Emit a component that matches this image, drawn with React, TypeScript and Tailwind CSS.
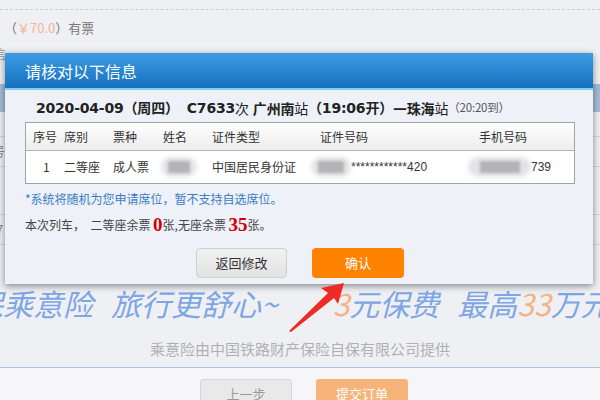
const cjk = "font-['Noto_Sans_CJK_SC',sans-serif]";

function Smudge({ w, core }: { w: number; core: number }) {
  return (
    <span className="relative inline-flex h-[26px] items-center justify-center" style={{ width: w }}>
      <span className="absolute inset-x-0 top-[3px] bottom-[3px] rounded-full bg-[#e4e4e6] blur-[2px]" />
      <span className="relative h-[12px] bg-[#b3b3b5] blur-[1.5px]" style={{ width: core }} />
    </span>
  );
}

export default function App() {
  return (
    <div className={`relative h-[400px] w-[600px] overflow-hidden bg-[#eff0f4] ${cjk}`}>
      {/* page behind the dialog */}
      <div className="h-[10px] border-b border-dashed border-[#cdcdcd]" />
      <div className="h-[26px] pl-[4px] pt-[10px] text-[13px] leading-[16px] text-[#777]">
        （<span className="text-[#f3b593]">￥70.0</span>）有票
      </div>
      <div className="flex h-[250px] flex-col">
        <div className="h-[48px] pt-[9px] pl-[1px] text-[13px] leading-[18px] text-[#999]">
          <span className="-ml-[8px]">信</span>
        </div>
        <div className="h-[28px] bg-[#a3bcd8]" />
        <div className="h-[25px] border-b border-[#d4d6dc]" />
        <div className="h-[30px] border-b border-[#d4d6dc] pt-[6px] text-[13px] leading-[16px] text-[#888]">
          <span className="-ml-[8px]">号</span>
        </div>
        <div className="h-[48px] border-b border-[#d4d6dc]" />
        <div className="h-[30px] border-b border-[#d4d6dc] pt-[7px] text-[13px] leading-[16px] text-[#888]">
          <span className="-ml-[4px]">7</span>
        </div>
      </div>

      {/* insurance banner */}
      <div className="flex h-[34px] items-center whitespace-nowrap text-[30px] italic leading-[34px] text-[#7ea6e4]">
        <span className="-ml-[27px]">保乘意险</span>
        <span className="ml-[18px]">旅行更舒心~</span>
        <span className="ml-[55px]">
          <span className="text-[#f3b287]">3</span>元保费
        </span>
        <span className="ml-[18px]">
          最高<span className="text-[#f3b287]">33</span>万元
        </span>
      </div>
      <div className="h-[48px] border-b border-[#a9c3e3] pt-[19px] text-center text-[15px] leading-[20px] text-[#b0b0b0]">
        乘意险由中国铁路财产保险自保有限公司提供
      </div>
      <div className="flex h-[32px] gap-[24px] bg-[#f6f6f8] pt-[11px] pl-[200px] text-[13px]">
        <div className="flex h-[30px] w-[92px] items-center justify-center rounded-[3px] border border-[#d6d6d6] bg-[#e9e9ea] text-[#999]">
          上一步
        </div>
        <div className="flex h-[30px] w-[92px] items-center justify-center rounded-[3px] bg-[#f6b47b] text-white">
          提交订单
        </div>
      </div>

      {/* dialog */}
      <div className="absolute left-[5px] top-[53px] flex h-[231px] w-[588px] flex-col bg-[#eef1f8] shadow-[0_2px_7px_rgba(0,0,0,0.45)]">
        <div className="flex h-[35px] items-center bg-gradient-to-b from-[#3c9de3] to-[#1670bf] pl-[20px] text-[16px] text-white">
          请核对以下信息
        </div>
        <div className="h-[2px] bg-[#84cdf2]" />
        <div className="flex flex-col pl-[20px] pr-[18px]">
          <div className="flex h-[18px] items-center mt-[9px] pl-[11px] whitespace-nowrap font-['DejaVu_Sans','Noto_Sans_CJK_SC',sans-serif] text-[14px] font-bold tracking-[-0.2px] text-[#222]">
            <span>2020-04-09（周四）</span>
            <span className="ml-[8px]">C7633</span>
            <span className={`${cjk} font-normal`}>次</span>
            <span className={`ml-[4px] ${cjk}`}>广州南</span>
            <span className={`${cjk} font-normal`}>站</span>
            <span>（19:06开）—</span>
            <span className={cjk}>珠海</span>
            <span className={`${cjk} font-normal`}>站</span>
            <span className={`${cjk} text-[11.5px] font-normal text-[#555]`}>（20:20到）</span>
          </div>

          <div className="mt-[5px] border border-[#a3a3a3] bg-white text-[12px] text-[#333]">
            <div className="grid h-[28px] grid-cols-[31px_49px_50px_49px_108px_159px_1fr] items-center border-b border-[#b5b5b5] bg-gradient-to-b from-white to-[#ececec] pl-[7px]">
              <span>序号</span>
              <span>席别</span>
              <span>票种</span>
              <span>姓名</span>
              <span>证件类型</span>
              <span>证件号码</span>
              <span>手机号码</span>
            </div>
            <div className="grid h-[32px] grid-cols-[31px_49px_50px_49px_108px_159px_1fr] items-center pl-[7px]">
              <span className="pl-[10px]">1</span>
              <span>二等座</span>
              <span>成人票</span>
              <span className="-ml-[2px] flex items-center">
                <Smudge w={36} core={22} />
              </span>
              <span>中国居民身份证</span>
              <span className="-ml-[9px] flex items-center">
                <Smudge w={40} core={26} />
                <span className="font-['Liberation_Sans',sans-serif]">************420</span>
              </span>
              <span className="-ml-[11px] flex items-center">
                <Smudge w={63} core={40} />
                <span className="font-['Liberation_Sans',sans-serif]">739</span>
              </span>
            </div>
          </div>

          <div className="mt-[7px] text-[12px] leading-[16px] text-[#3a7cc4]">
            *系统将随机为您申请席位，暂不支持自选席位。
          </div>
          <div className="mt-[8px] flex h-[20px] items-center whitespace-pre text-[12px] text-[#444]">
            <span>本次列车，  二等座余票 </span>
            <span className="font-['Liberation_Serif',serif] text-[19px] font-bold text-[#d00000]">0</span>
            <span>张,无座余票 </span>
            <span className="font-['Liberation_Serif',serif] text-[19px] font-bold text-[#d00000]">35</span>
            <span>张。</span>
          </div>

          <div className="mt-[13px] flex justify-center gap-[25px] text-[13px]">
            <div className="flex h-[30px] w-[91px] items-center justify-center rounded-[4px] border border-[#cfcfcf] bg-gradient-to-b from-[#f2f2f2] to-[#e2e2e2] text-[#333]">
              返回修改
            </div>
            <div className="flex h-[30px] w-[92px] items-center justify-center rounded-[4px] bg-[#ff8200] text-white">
              确认
            </div>
          </div>
        </div>
      </div>

      {/* red annotation arrow */}
      <svg className="pointer-events-none absolute left-0 top-0" width="600" height="400" viewBox="0 0 600 400">
        <polygon
          points="344,283 321,288 328,293 289,331 291,332 334,298 338,304"
          fill="#ef2b25"
        />
      </svg>
    </div>
  );
}
